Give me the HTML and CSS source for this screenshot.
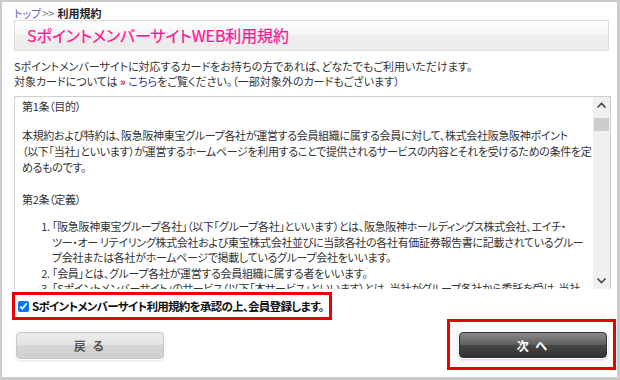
FILE: index.html
```html
<!DOCTYPE html>
<html lang="ja">
<head>
    <meta charset="UTF-8">
    <title>Sポイントメンバーサイト WEB利用規約</title>
    <link rel="stylesheet" href="styles.css">
</head>
<body>
<div class="frame">
    <div class="breadcrumb"><a href="#" class="crumb-link">トップ</a><span class="crumb-sep">&gt;&gt;</span><b>利用規約</b></div>
    <div class="title-box"><h1>SポイントメンバーサイトWEB利用規約</h1></div>
    <p class="intro">Sポイントメンバーサイトに対応するカードをお持ちの方であれば、どなたでもご利用いただけます。<br>対象カードについては <span class="arrow">»</span> <a href="#" class="link">こちら</a>をご覧ください。（一部対象外のカードもございます）</p>

    <div class="terms">
        <div class="terms-text">
            <p class="heading">第1条（目的）</p>
            <p class="para">本規約および特約は、阪急阪神東宝グループ各社が運営する会員組織に属する会員に対して、株式会社阪急阪神ポイント<br>（以下「当社」といいます）が運営するホームページを利用することで提供されるサービスの内容とそれを受けるための条件を定<br>めるものです。</p>
            <p class="heading heading2">第2条（定義）</p>
            <ol class="list">
                <li>「阪急阪神東宝グループ各社」（以下「グループ各社」といいます）とは、阪急阪神ホールディングス株式会社、エイチ・<br>ツー・オー リテイリング株式会社および東宝株式会社並びに当該各社の各社有価証券報告書に記載されているグルー<br>プ会社または各社がホームページで掲載しているグループ会社をいいます。</li>
                <li>「会員」とは、グループ各社が運営する会員組織に属する者をいいます。</li>
                <li>「Sポイントメンバーサイト」のサービス（以下「本サービス」といいます）とは、当社がグループ各社から委託を受け、当社</li>
            </ol>
        </div>
        <div class="scrollbar">
            <div class="scroll-btn">
                <svg width="17" height="17" viewBox="0 0 17 17"><polyline points="4.5,10.5 8.5,6.5 12.5,10.5" fill="none" stroke="#444" stroke-width="1.6"/></svg>
            </div>
            <div class="scroll-track"><div class="scroll-thumb"></div></div>
            <div class="scroll-btn">
                <svg width="17" height="17" viewBox="0 0 17 17"><polyline points="4.5,6.5 8.5,10.5 12.5,6.5" fill="none" stroke="#444" stroke-width="1.6"/></svg>
            </div>
        </div>
    </div>

    <label class="agree"><input type="checkbox" checked class="agree-check">Sポイントメンバーサイト利用規約を承認の上、会員登録します。</label>

    <div class="actions">
        <button class="btn btn-back">戻 る</button>
        <div class="next-wrap"><button class="btn btn-next">次 へ</button></div>
    </div>
</div>
</body>
</html>
```

FILE: styles.css
```css
* {
    padding: 0;
    margin: 0;
    box-sizing: border-box;
}

body {
    background-color: #fff;
    font-family: "Noto Sans CJK JP", "Liberation Sans", sans-serif;
    font-feature-settings: "palt";
    font-size: 11px;
    color: #333;
}

.frame {
    width: 620px;
    height: 380px;
    border: solid #cbcbcb;
    border-width: 2px 3px 3px 2px;
    padding-left: 12px;
    overflow: hidden;
}

.breadcrumb {
    padding-top: 3px;
    height: 18px;
    line-height: 16px;
    font-size: 11px;
}

.crumb-link {
    color: #6666bb;
    text-decoration: none;
}

.crumb-sep {
    color: #777;
    margin: 0 3px 0 1px;
}

.breadcrumb b {
    color: #222;
}

.title-box {
    width: 595px;
    height: 31px;
    border: 1px solid #dedede;
    background: linear-gradient(#fdfdfd, #f6f6f6 50%, #ededed 50%, #ececec);
    padding-left: 12px;
}

h1 {
    font-size: 16px;
    font-weight: normal;
    line-height: 29px;
    color: #ff1493;
    -webkit-text-stroke: 0.2px #ff1493;
    letter-spacing: -0.1px;
}

.intro {
    margin-top: 8px;
    line-height: 14.5px;
    font-size: 11px;
    color: #333;
}

.arrow {
    color: #cc2222;
    font-weight: bold;
}

.link {
    color: #2233aa;
    text-decoration: none;
}

.terms {
    display: flex;
    margin-top: 8px;
    width: 597px;
    height: 193px;
    border: 1px solid #cfcfcf;
    border-bottom: none;
}

.terms-text {
    flex: 1;
    overflow: hidden;
    padding: 1px 0 0 7px;
    line-height: 16px;
    white-space: nowrap;
    letter-spacing: -0.32px;
    color: #333;
}

.heading {
    margin-bottom: 13px;
}

.para {
    margin-bottom: 16px;
}

.heading2 {
    margin-bottom: 12px;
}

.list {
    padding-left: 30px;
    line-height: 15.6px;
}

.scrollbar {
    width: 17px;
    display: flex;
    flex-direction: column;
    background: #f0f0f0;
}

.scroll-btn {
    height: 17px;
}

.scroll-btn svg {
    display: block;
}

.scroll-track {
    flex: 1;
    padding: 4px 1px 0 1px;
}

.scroll-thumb {
    height: 13px;
    background: #cdcdcd;
}

.agree {
    display: inline-flex;
    align-items: center;
    margin: 3px 0 0 -2px;
    height: 28px;
    border: 3px solid #ee0000;
    padding: 0 5px 0 3px;
    font-size: 11.5px;
    font-weight: bold;
    color: #111;
    letter-spacing: -0.7px;
}

.agree-check {
    width: 11px;
    height: 11px;
    margin: 0 3px 0 0;
}

.actions {
    display: flex;
    justify-content: space-between;
    align-items: flex-start;
    margin-top: -1px;
}

.btn {
    width: 148px;
    height: 27px;
    border-radius: 4px;
    font-family: "Noto Sans CJK JP", sans-serif;
    font-size: 12px;
    font-weight: bold;
    letter-spacing: 2px;
    cursor: pointer;
}

.btn-back {
    margin: 13px 0 0 2px;
    border: 1px solid #c8c8c8;
    background: linear-gradient(#ececec, #e2e2e2 50%, #d6d6d6 50%, #cfcfcf);
    color: #555;
    box-shadow: 0 0 0 1px #fff, 0 1px 3px 1px rgba(0, 0, 0, 0.12);
}

.next-wrap {
    border: 3px solid #ee0000;
    padding: 10px 6px 9px 9px;
    margin-right: 1px;
}

.btn-next {
    display: block;
    height: 26px;
    border: 1px solid #333;
    background: linear-gradient(#8a8a8a, #5e5e5e 50%, #474747 50%, #333);
    color: #fff;
    box-shadow: 0 0 0 1px #fff, 0 1px 3px 1px rgba(0, 0, 0, 0.2);
}
```
